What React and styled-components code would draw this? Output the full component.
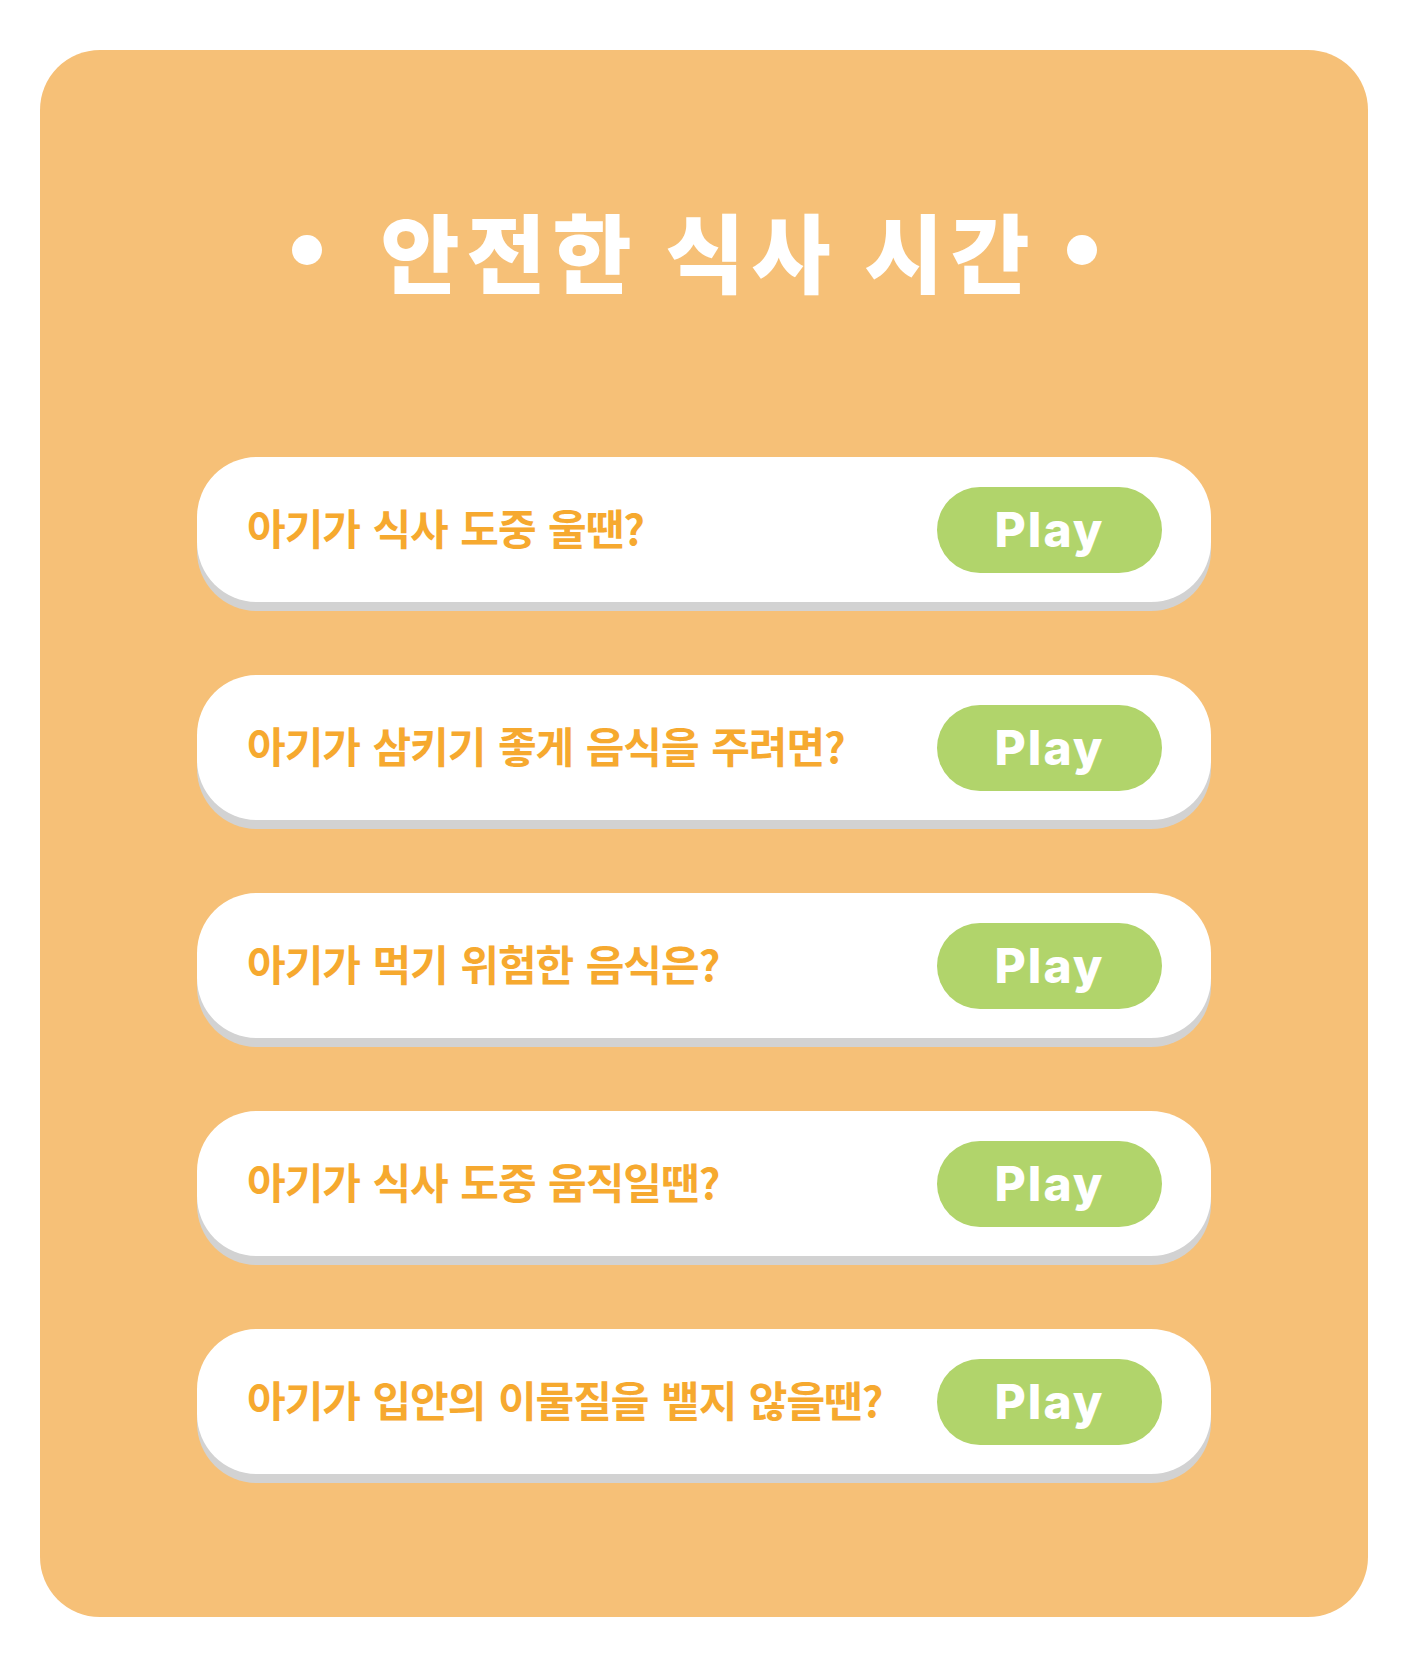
import React from 'react';
import styled, { createGlobalStyle } from 'styled-components';

const GlobalStyle = createGlobalStyle`
  body {
    margin: 0;
    background: #ffffff;
    font-family: "Noto Sans CJK KR", "Noto Sans", sans-serif;
  }
`;

const Page = styled.div`
  padding: 50px 40px 51px;
`;

const Card = styled.div`
  background-color: #f6c077;
  border-radius: 60px;
  padding: 150px 157px 143px;
  display: flex;
  flex-direction: column;
  align-items: stretch;
`;

const Title = styled.h1`
  margin: 0 0 157px;
  height: 100px;
  padding-right: 19px;
  display: flex;
  justify-content: center;
  align-items: center;
  color: #ffffff;
  font-family: "Noto Sans CJK KR", sans-serif;
  font-weight: 900;
  font-size: 86px;
  letter-spacing: 7px;
  line-height: 1;
`;

const Dot = styled.span`
  width: 30px;
  height: 30px;
  border-radius: 50%;
  background: #ffffff;
  flex-shrink: 0;
  margin-left: ${(p) => (p.$side === 'right' ? '30px' : '0')};
  margin-right: ${(p) => (p.$side === 'left' ? '58px' : '0')};
`;

const List = styled.div`
  display: flex;
  flex-direction: column;
  gap: 73px;
`;

const Row = styled.div`
  height: 145px;
  box-sizing: border-box;
  background: #ffffff;
  border-radius: 60px;
  box-shadow: 0 9px 0 #d2d2d2;
  display: flex;
  align-items: center;
  justify-content: space-between;
  padding: 0 49px 0 50px;
`;

const Question = styled.span`
  color: #f6a92f;
  font-family: "Noto Sans CJK KR", sans-serif;
  font-weight: 700;
  font-size: 42px;
  letter-spacing: -1px;
  word-spacing: 4px;
  line-height: 1;
  margin-top: -6px;
`;

const PlayButton = styled.button`
  width: 225px;
  height: 86px;
  border: none;
  border-radius: 43px;
  background-color: #b1d46b;
  color: #ffffff;
  font-family: Inter, "Liberation Sans", sans-serif;
  font-weight: 800;
  font-size: 48px;
  letter-spacing: 2px;
  cursor: pointer;
  padding: 0;
  display: flex;
  align-items: center;
  justify-content: center;
`;

const questions = [
  '아기가 식사 도중 울땐?',
  '아기가 삼키기 좋게 음식을 주려면?',
  '아기가 먹기 위험한 음식은?',
  '아기가 식사 도중 움직일땐?',
  '아기가 입안의 이물질을 뱉지 않을땐?',
];

function App() {
  return (
    <Page>
      <GlobalStyle />
      <Card>
        <Title>
          <Dot $side="left" />
          안전한 식사 시간
          <Dot $side="right" />
        </Title>
        <List>
          {questions.map((q) => (
            <Row key={q}>
              <Question>{q}</Question>
              <PlayButton>Play</PlayButton>
            </Row>
          ))}
        </List>
      </Card>
    </Page>
  );
}

export default App;
